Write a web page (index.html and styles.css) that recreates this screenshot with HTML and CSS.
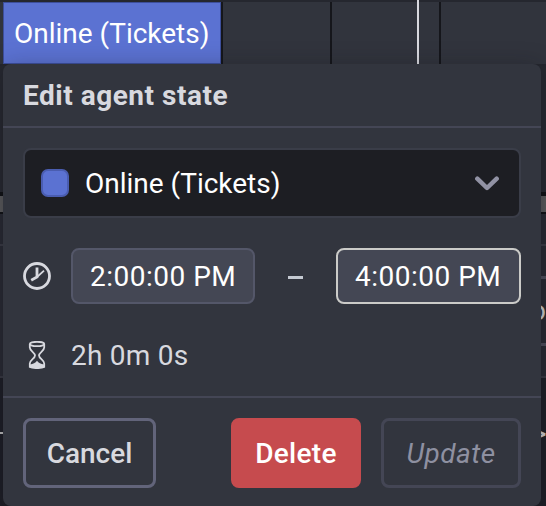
FILE: index.html
```html
<!DOCTYPE html>
<html lang="en">
<head>
<meta charset="utf-8">
<title>Edit agent state</title>
<link rel="stylesheet" href="styles.css">
</head>
<body>
<div class="app">
  <div class="schedule">
    <div class="track">
      <div class="shift"><span class="t-shift">Online (Tickets)</span></div>
      <div class="slot slot-a"></div>
      <div class="slot slot-b"></div>
      <div class="slot slot-c"></div>
    </div>
    <div class="lane lane-1"></div>
    <div class="divider"></div>
    <div class="lane lane-2"></div>
    <div class="lane lane-3"><span class="peek peek-o">o</span></div>
    <div class="lane lane-4"><span class="now-left"></span><span class="peek peek-gt">&gt;</span></div>
    <i class="now"></i>
  </div>

  <section class="popover">
    <header class="head"><h1>Edit agent state</h1></header>
    <div class="body">
      <div class="select">
        <span class="swatch"></span>
        <span class="t-select">Online (Tickets)</span>
        <svg class="chevron" width="24" height="16" viewBox="0 0 24 16"><path d="M2.300 3.700 12 13l9.700-9.300" /></svg>
      </div>
      <div class="times">
        <svg class="clock" width="28" height="28" viewBox="0 0 28 28"><circle cx="14" cy="14" r="12.500"/><path class="hour" d="M14 5.500v9.500l-5.800 3.200"/><path class="minute" d="M13.500 15.500 21 8.700"/></svg>
        <div class="time"><span class="t-time">2:00:00 PM</span></div>
        <span class="dash"></span>
        <div class="time focused"><span class="t-time">4:00:00 PM</span></div>
      </div>
      <div class="duration">
        <svg class="hourglass" width="28" height="28" viewBox="0 0 28 28"><ellipse cx="14" cy="3" rx="7.200" ry="2.200"/><path d="M6.800 3v3.500c0 3.500 5.200 5 5.200 8s-5.200 4.500-5.200 8V26c3 1.500 11.400 1.500 14.400 0v-3.500c0-3.500-5.200-5-5.200-8s5.200-4.500 5.200-8V3"/><path class="sand" d="M7 23.500c3-.5 5.500-1.600 7-3.800 1.500 2.200 4 3.300 7 3.800V26c-3 1.300-11 1.300-14 0z"/></svg>
        <span class="t-duration">2h 0m 0s</span>
      </div>
    </div>
    <footer class="foot">
      <button class="btn cancel"><span>Cancel</span></button>
      <button class="btn delete"><span>Delete</span></button>
      <button class="btn update" disabled><span>Update</span></button>
    </footer>
  </section>
</div>
</body>
</html>
```
FILE: styles.css
```css
*, *::before, *::after { box-sizing: border-box; }
body { margin: 0; background: #22232b; font-family: Roboto, "Liberation Sans", sans-serif; font-size: 28px; line-height: 36px; }
span { white-space: nowrap; }
.app { position: relative; width: 546px; height: 506px; overflow: hidden; }
.schedule { height: 506px; }
.track { display: flex; height: 66px; padding-top: 2px; background: #31343d; border-bottom: 2px solid #25272f; box-shadow: inset 0 2px #25272f; }
.shift { width: 218px; height: 62px; margin-left: 3px; padding: 13px 0 0 10px; background: #5b72d2; border: 1px solid #3d4f9c; color: #fff; }
.slot { border-left: 2px solid #15161b; height: 62px; }
.slot-a { width: 109px; }
.slot-b { width: 109px; }
.slot-c { flex: 1; }
.lane-1 { height: 126px; background: #262830; }
.divider { height: 22px; background: #5a5a5c; border-top: 4px solid #101115; border-bottom: 2px solid #101115; }
.lane-2 { height: 32px; background: #282a33; border-bottom: 2px solid #3a3b45; }
.lane-3 { position: relative; height: 132px; background: #282a33; border-bottom: 2px solid #373842; }
.lane-3::after { content: ""; position: absolute; left: 541px; right: 0; top: 30px; height: 70px; border: solid #4c4d5b; border-width: 3px 0; }
.lane-4 { height: 128px; background: #1d1e26; position: relative; }
.now { position: absolute; left: 417px; top: 0; width: 2px; height: 64px; background: #d8d9df; }
.now-left { position: absolute; left: 0; top: 54px; width: 4px; height: 2px; background: #bbb; }
.peek { position: absolute; color: #ccc; font-size: 28px; }
.peek-o { left: 530px; top: 47px; }
.peek-gt { left: 529px; top: 37px; font-size: 34px; }

.popover { position: absolute; left: 3px; top: 64px; width: 538px; height: 442px; background: #32353e; border-radius: 8px; box-shadow: 0 4px 24px rgba(16, 17, 22, .35); color: #d8d9df; }
.head { height: 64px; padding: 14px 20px 0; border-bottom: 2px solid #444655; }
h1 { margin: 0; font-size: 28px; line-height: 36px; font-weight: 700; letter-spacing: .52px; white-space: nowrap; }
.body { height: 268px; padding: 20px; }
.select { display: flex; align-items: center; width: 498px; height: 70px; padding: 0 20px 0 16px; background: #1d1e23; border: 2px solid #3a3d48; border-radius: 8px; color: #fff; }
.swatch { width: 28px; height: 28px; margin-right: 16px; background: #5b72d2; border: 2px solid #4a5db0; border-radius: 7px; }
.t-select { padding-top: 2px; }
.chevron { margin-left: auto; fill: none; stroke: #9192a4; stroke-width: 4.500; stroke-linecap: round; stroke-linejoin: round; }
.times { display: flex; align-items: center; height: 56px; margin-top: 30px; }
.clock { margin-right: 20px; fill: none; stroke: #d8d9df; stroke-width: 2.800; }
.clock .minute { stroke-width: 1.800; }
.time { width: 184px; height: 56px; padding: 9px 0 0 17px; background: #444754; border: 2px solid #545769; border-radius: 8px; color: #fff; letter-spacing: .5px; }
.time.focused { width: 185px; border-color: #cbcbc8; margin-left: auto; }
.dash { width: 15px; height: 3px; margin: 2px 0 0 33px; background: #c4c9d1; }
.duration { display: flex; align-items: center; height: 36px; margin-top: 33px; }
.t-duration { padding-top: 2px; letter-spacing: .25px; }
.hourglass { margin-right: 20px; fill: none; stroke: #d8d9df; stroke-width: 1.800; }
.hourglass .sand { fill: #d8d9df; stroke: none; }
.foot { display: flex; height: 110px; padding: 20px; border-top: 2px solid #444655; }
.btn { height: 70px; padding: 2px 0 0; font: 500 28px/36px Roboto, sans-serif; border-radius: 8px; border: 3px solid #62647a; background: transparent; color: #d8d9df; }
.cancel { width: 133px; }
.delete { width: 130px; margin-left: 75px; background: #c64b4e; border-color: #c64b4e; color: #fff; letter-spacing: .3px; }
.update { width: 140px; margin-left: 20px; border-color: #444655; color: #8e90a1; font-style: italic; font-weight: 400; letter-spacing: .5px; }
```
